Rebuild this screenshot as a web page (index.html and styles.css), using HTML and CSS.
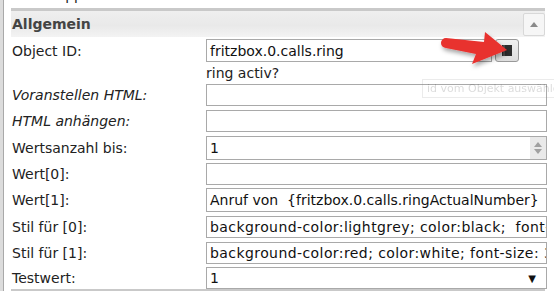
FILE: index.html
```html
<!DOCTYPE html>
<html>
<head>
<meta charset="utf-8">
<link rel="stylesheet" href="styles.css">
</head>
<body>
<div class="page">
  <div class="gutter"></div>
  <div class="main">
    <div class="prev">der Gruppe</div>
    <div class="section">
      <div class="sec-head">
        <span class="sec-title">Allgemein</span>
        <div class="collapse"><svg width="8" height="5" viewBox="0 0 8 5"><path d="M0 5 L4 0 L8 5 Z" fill="#8a8a8a"/></svg></div>
      </div>
      <div class="rows">
        <div class="row h23">
          <span class="label">Object ID:</span>
          <div class="objfield">
            <div class="input obj">fritzbox.0.calls.ring</div>
            <div class="pick"><svg width="10" height="11" viewBox="0 0 10 11"><rect x="0" y="0" width="10" height="11" fill="#2e2e2e"/><rect x="1.5" y="0" width="1" height="11" fill="#6a6a6a"/></svg></div>
          </div>
        </div>
        <div class="row h22">
          <span></span>
          <span class="note">ring activ?</span>
        </div>
        <div class="row h22 mb4">
          <span class="label it">Voranstellen HTML:</span>
          <div class="input"></div>
        </div>
        <div class="row h22 mb4">
          <span class="label it">HTML anhängen:</span>
          <div class="input"></div>
        </div>
        <div class="row h24 mb3">
          <span class="label">Wertsanzahl bis:</span>
          <div class="input spin-input"><span class="val">1</span>
            <div class="spinner">
              <svg width="8" height="5" viewBox="0 0 8 5"><path d="M0 5 L4 0 L8 5 Z" fill="#a0a0a0"/></svg>
              <svg width="8" height="5" viewBox="0 0 8 5"><path d="M0 0 L4 5 L8 0 Z" fill="#a0a0a0"/></svg>
            </div>
          </div>
        </div>
        <div class="row h22 mb3">
          <span class="label">Wert[0]:</span>
          <div class="input"></div>
        </div>
        <div class="row h24 mb4">
          <span class="label">Wert[1]:</span>
          <div class="input">Anruf von  {fritzbox.0.calls.ringActualNumber}</div>
        </div>
        <div class="row h22 mb4">
          <span class="label">Stil für [0]:</span>
          <div class="input css">background-color:lightgrey; color:black;  font-size: 30px</div>
        </div>
        <div class="row h22 mb3">
          <span class="label">Stil für [1]:</span>
          <div class="input css">background-color:red; color:white; font-size: 30px</div>
        </div>
        <div class="row h22">
          <span class="label">Testwert:</span>
          <div class="input select"><span class="val">1</span><span class="caret">▼</span></div>
        </div>
      </div>
    </div>
    <div class="next-band"></div>
  </div>
  <div class="tooltip">id vom Objekt auswählen</div>
  <svg class="arrow" width="80" height="45" viewBox="0 0 80 45">
    <defs>
      <filter id="sh" x="-20%" y="-30%" width="150%" height="180%">
        <feDropShadow dx="1.5" dy="3" stdDeviation="2" flood-color="#000" flood-opacity="0.35"/>
      </filter>
    </defs>
    <path d="M8 10 L46 14 L47 4 L69 22 L34 36 L38 26 L8 20 A5 5 0 0 1 8 10 Z" fill="#e8302e" filter="url(#sh)"/>
  </svg>
</div>
</body>
</html>
```

FILE: styles.css
```css
* { box-sizing: border-box; }
html, body { margin: 0; padding: 0; background: #fff; }
body {
  font-family: "DejaVu Sans", Verdana, sans-serif;
  font-size: 14px;
  color: #222;
  width: 554px;
  height: 291px;
  overflow: hidden;
}
.page { position: relative; display: flex; height: 291px; }
.gutter {
  width: 4px;
  flex: none;
  background: #dcdcdc;
  border-right: 1px solid #a9a9a9;
}
.main { flex: 1; padding-left: 7px; padding-right: 9px; min-width: 0; }
.prev {
  height: 16px;
  line-height: 16px;
  margin-top: -13px;
  padding-left: 1px;
  color: #222;
}
.section { margin-top: 5px; }
.sec-head {
  height: 29px;
  border-top: 3px solid #c9c9c9;
  display: flex;
  justify-content: space-between;
  align-items: flex-start;
  background: linear-gradient(to bottom, #efefef 0%, #e9e9e9 55%, #f3f3f3 100%);
}
.sec-title {
  font-weight: bold;
  color: #444;
  line-height: 26px;
  padding-left: 1px;
}
.collapse {
  margin-top: 2px;
  width: 22px;
  height: 23px;
  border: 1px solid #d8d8d8;
  border-radius: 2px;
  background: #f6f6f6;
  display: flex;
  align-items: center;
  justify-content: center;
}
.rows { padding-top: 2px; display: flex; flex-direction: column; }
.row {
  display: grid;
  grid-template-columns: 195px 341px;
  align-items: center;
}
.h22 { height: 22px; }
.h23 { height: 23px; }
.h24 { height: 24px; }
.mb3 { margin-bottom: 3px; }
.mb4 { margin-bottom: 4px; }
.label { padding-left: 1px; line-height: 16px; white-space: nowrap; }
.it { font-style: italic; }
.note { line-height: 16px; color: #222; }
.input {
  position: relative;
  height: 100%;
  border: 1px solid #a9a9a9;
  background: #fff;
  padding-left: 3px;
  display: flex;
  align-items: center;
  white-space: pre;
  overflow: hidden;
  color: #111;
}
.css { letter-spacing: 0.42px; }
.objfield { display: flex; height: 23px; gap: 3px; }
.obj { width: 286px; flex: none; }
.pick {
  width: 24px;
  height: 23px;
  border: 1px solid #999;
  border-radius: 3px;
  background: linear-gradient(to bottom, #f0f0f0, #dedede);
  display: flex;
  align-items: center;
  justify-content: center;
}
.spin-input { padding-right: 0; }
.val { flex: 1; }
.spinner {
  width: 16px;
  height: 100%;
  background: #e9e9e9;
  display: flex;
  flex-direction: column;
  align-items: center;
  justify-content: space-around;
  padding: 4px 0;
}
.select { padding-right: 10px; }
.caret { font-size: 10px; color: #111; }
.next-band {
  margin-top: 0;
  height: 3px;
  background: #c9c9c9;
}
.tooltip {
  position: absolute;
  left: 422px;
  top: 79px;
  height: 19px;
  width: 170px;
  border: 1px solid #888;
  padding-left: 4px;
  font-size: 11px;
  line-height: 17px;
  color: #222;
  white-space: nowrap;
  opacity: 0.16;
}
.arrow { position: absolute; left: 438px; top: 28px; }
```
